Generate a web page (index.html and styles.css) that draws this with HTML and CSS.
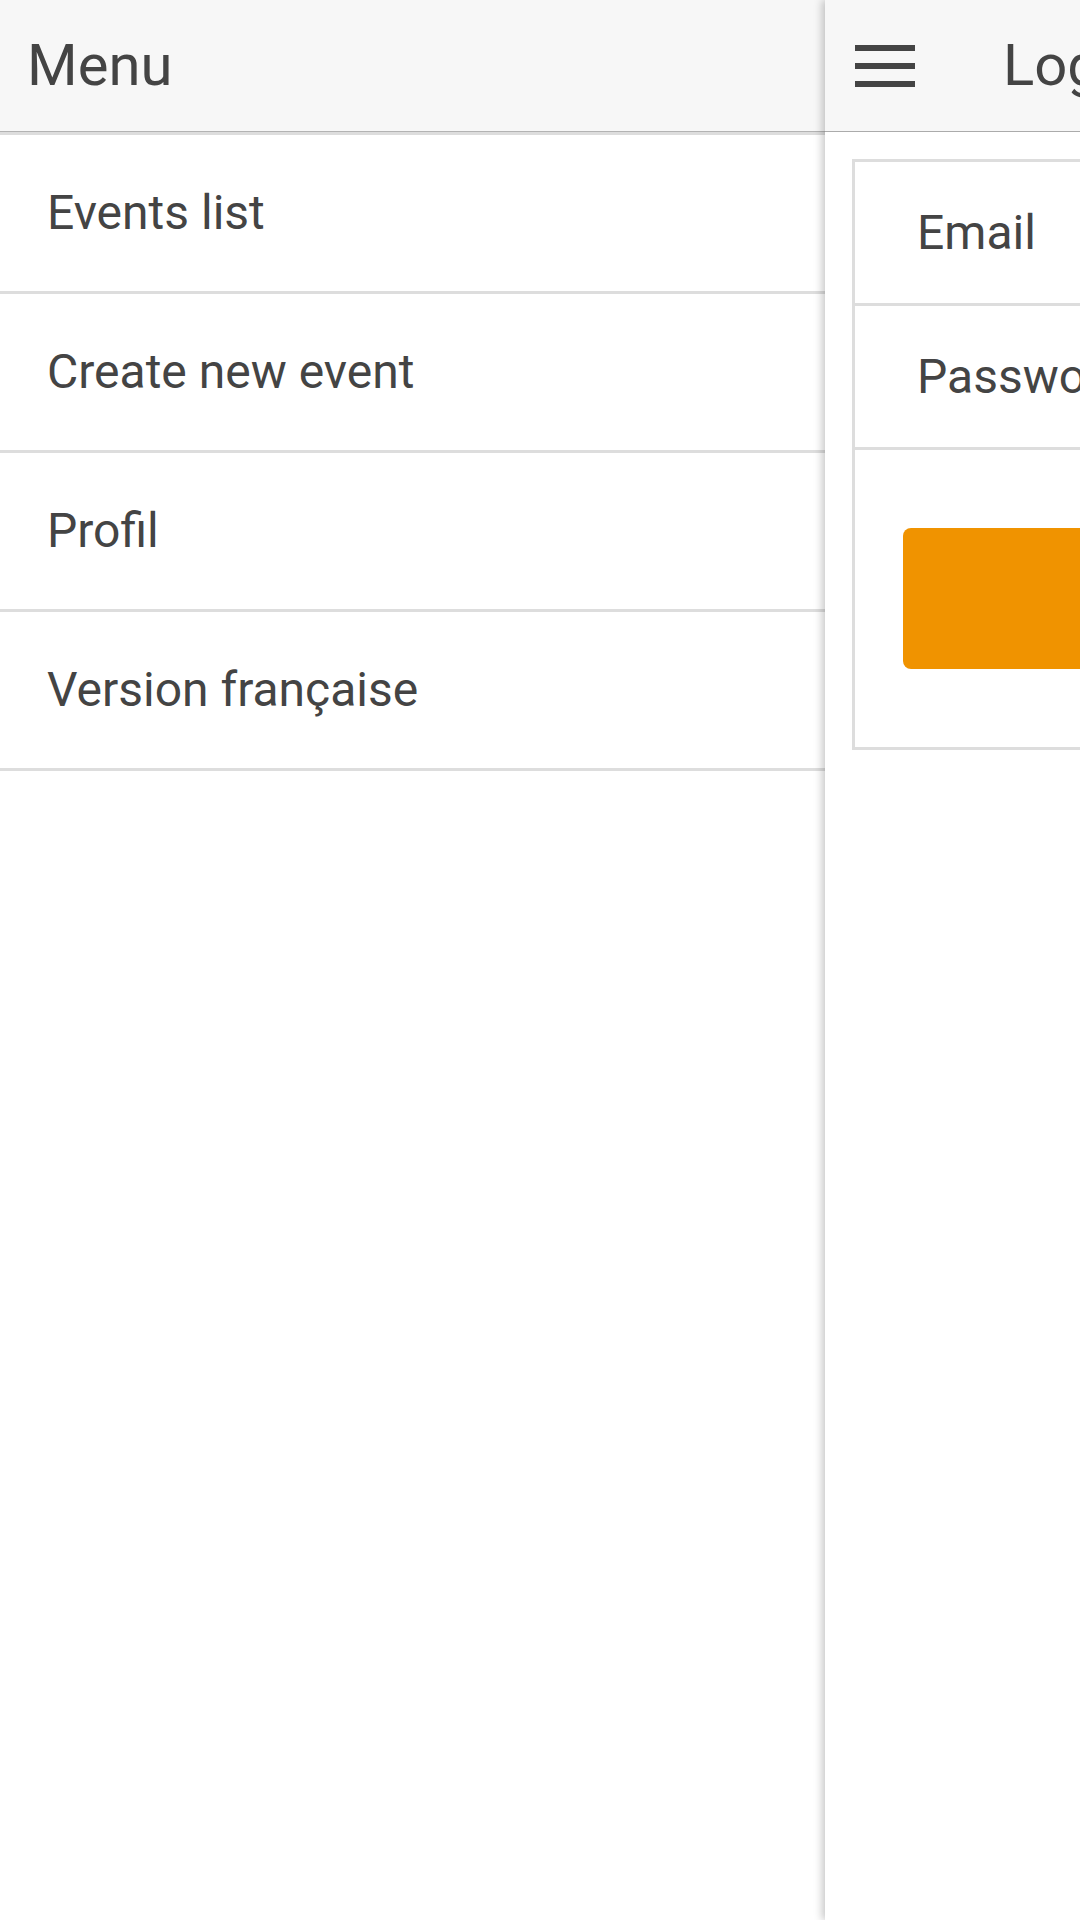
FILE: index.html
```html
<!DOCTYPE html>
<html lang="en">
<head>
<meta charset="utf-8">
<title>Login</title>
<link rel="stylesheet" href="styles.css">
</head>
<body>
<div class="app">
  <nav class="drawer">
    <div class="drawer-header">Menu</div>
    <ul class="drawer-list">
      <li class="drawer-item">Events list</li>
      <li class="drawer-item">Create new event</li>
      <li class="drawer-item">Profil</li>
      <li class="drawer-item">Version française</li>
    </ul>
  </nav>
  <main class="main">
    <header class="main-header">
      <svg class="burger" width="60" height="42" viewBox="0 0 60 42" aria-hidden="true">
        <rect x="0" y="0" width="60" height="6" fill="#444"/>
        <rect x="0" y="18" width="60" height="6" fill="#444"/>
        <rect x="0" y="36" width="60" height="6" fill="#444"/>
      </svg>
      <span class="main-title">Login</span>
    </header>
    <section class="form-box">
      <div class="field">Email</div>
      <div class="field">Password</div>
      <div class="actions">
        <div class="btn"></div>
      </div>
    </section>
  </main>
</div>
</body>
</html>
```

FILE: styles.css
```css
html, body {
  margin: 0;
  padding: 0;
  background: #ffffff;
}

body {
  font-family: Roboto, "Noto Sans", "Liberation Sans", sans-serif;
  color: #444444;
  width: 1080px;
  height: 1920px;
  overflow: hidden;
}

.app {
  display: flex;
  height: 1920px;
  width: 1080px;
  overflow: hidden;
}

.drawer {
  width: 825px;
  flex-shrink: 0;
  background: #ffffff;
}

.drawer-header {
  height: 131px;
  line-height: 131px;
  padding-left: 27px;
  font-size: 58px;
  background: #f7f7f7;
  border-bottom: 1px solid #b3b3b3;
}

.drawer-list {
  list-style: none;
  margin: 0;
  padding: 0;
  border-top: 3px solid #dddddd;
}

.drawer-item {
  height: 156px;
  line-height: 156px;
  padding-left: 47px;
  font-size: 48px;
  border-bottom: 3px solid #dddddd;
}

.main {
  position: relative;
  z-index: 1;
  width: 1080px;
  flex-shrink: 0;
  background: #ffffff;
  box-shadow: -3px 0 8px rgba(0, 0, 0, 0.22);
}

.main-header {
  height: 131px;
  display: flex;
  align-items: center;
  gap: 88px;
  padding-left: 30px;
  background: #f7f7f7;
  border-bottom: 1px solid #ababab;
}

.burger {
  display: block;
  flex-shrink: 0;
}

.main-title {
  font-size: 58px;
  line-height: 131px;
}

.form-box {
  margin: 27px;
  border: 3px solid #dddddd;
}

.field {
  height: 141px;
  line-height: 141px;
  padding-left: 62px;
  font-size: 48px;
  border-bottom: 3px solid #dddddd;
}

.actions {
  padding: 78px 48px;
}

.btn {
  height: 141px;
  border-radius: 8px;
  background: #f09300;
}
```
